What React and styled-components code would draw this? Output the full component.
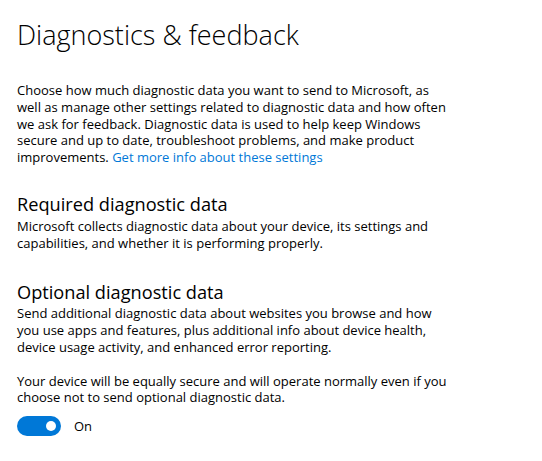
import styled, { createGlobalStyle } from 'styled-components';

const GlobalStyle = createGlobalStyle`
  html, body {
    margin: 0;
    padding: 0;
    background: #ffffff;
  }

  body {
    font-family: 'Open Sans', 'Noto Sans', sans-serif;
    color: #000000;
  }
`;

const Page = styled.div`
  display: flex;
  flex-direction: column;
  padding: 15px 17px 0 17px;
  width: 542px;
  height: 461px;
  box-sizing: border-box;
`;

const Title = styled.h1`
  margin: 0;
  font-size: 27px;
  font-weight: 300;
  line-height: 40px;
  color: #000000;
`;

const Text = styled.p`
  margin: ${(p) => p.$top || 0}px 0 0 0;
  width: 432px;
  font-size: 13px;
  line-height: 16.75px;
  color: #000000;
`;

const MoreLink = styled.a`
  color: #0078d7;
  text-decoration: none;
`;

const Heading = styled.h2`
  margin: ${(p) => p.$top}px 0 0 0;
  font-size: 18.2px;
  font-weight: 400;
  line-height: 24px;
  color: #000000;
`;

const ToggleRow = styled.label`
  display: flex;
  align-items: center;
  gap: 13px;
  margin-top: 10px;
  font-size: 13px;
`;

const Track = styled.span`
  position: relative;
  display: inline-block;
  width: 44px;
  height: 20px;
  border-radius: 10px;
  background: ${(p) => (p.$on ? '#0078d7' : '#ffffff')};
`;

const Knob = styled.span`
  position: absolute;
  top: 5px;
  left: ${(p) => (p.$on ? '29px' : '5px')};
  width: 10px;
  height: 10px;
  border-radius: 50%;
  background: ${(p) => (p.$on ? '#ffffff' : '#000000')};
`;

export default function App() {
  return (
    <Page>
      <GlobalStyle />
      <Title>Diagnostics &amp; feedback</Title>
      <Text $top={27}>
        Choose how much diagnostic data you want to send to Microsoft, as well as manage other settings
        related to diagnostic data and how often we ask for feedback. Diagnostic data is used to help keep
        Windows secure and up to date, troubleshoot problems, and make product improvements.{' '}
        <MoreLink href="#">Get more info about these settings</MoreLink>
      </Text>

      <Heading $top={26}>Required diagnostic data</Heading>
      <Text $top={2}>
        Microsoft collects diagnostic data about your device, its settings and capabilities, and whether it
        is performing properly.
      </Text>

      <Heading $top={29}>Optional diagnostic data</Heading>
      <Text $top={1}>
        Send additional diagnostic data about websites you browse and how you use apps and features, plus
        additional info about device health, device usage activity, and enhanced error reporting.
      </Text>
      <Text $top={17}>
        Your device will be equally secure and will operate normally even if you choose not to send optional
        diagnostic data.
      </Text>

      <ToggleRow>
        <Track $on>
          <Knob $on />
        </Track>
        On
      </ToggleRow>
    </Page>
  );
}
